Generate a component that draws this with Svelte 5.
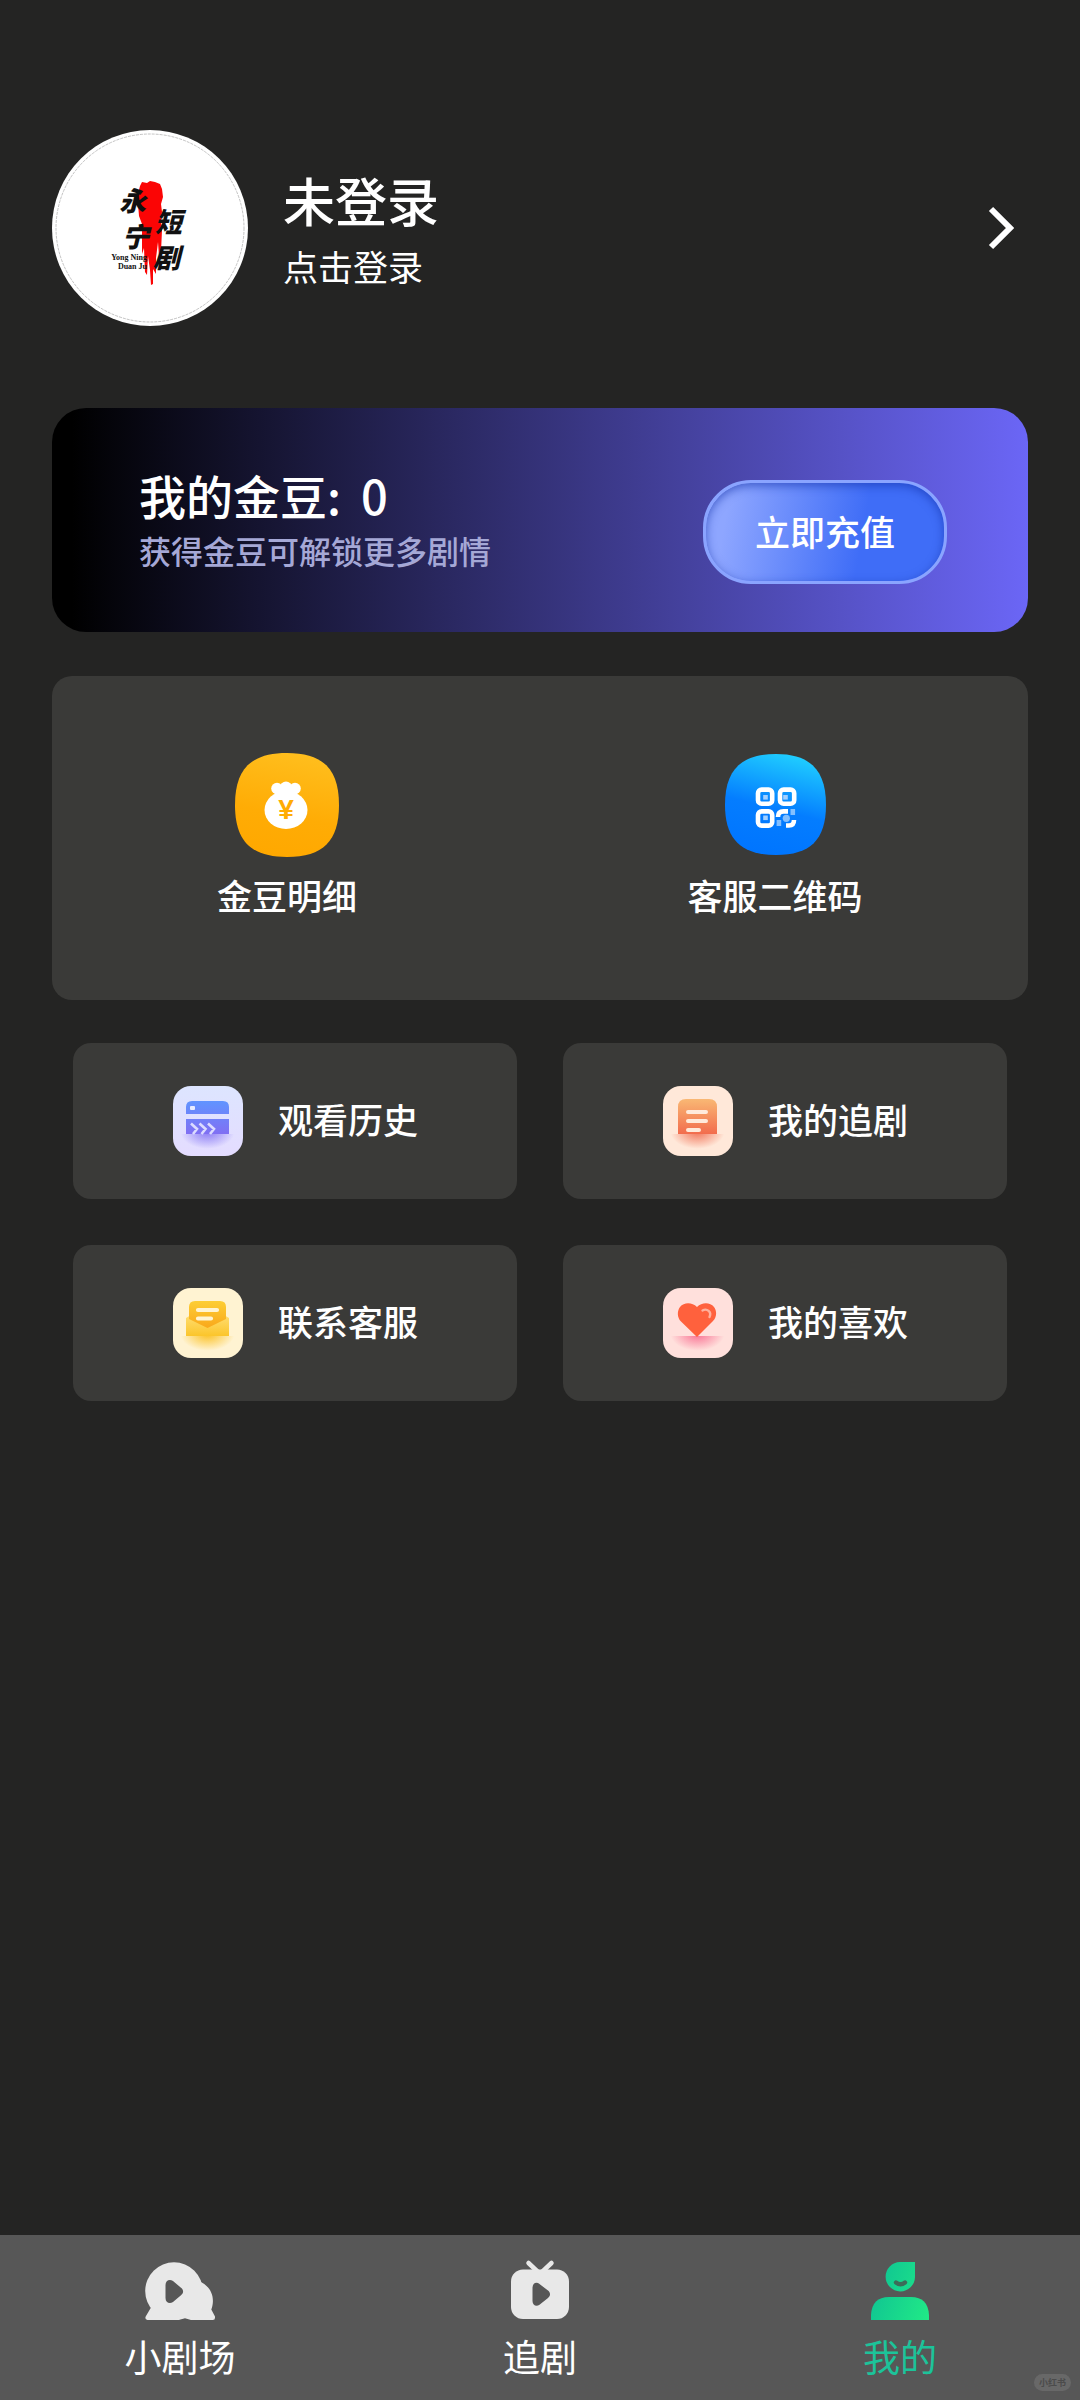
<script>
  let beans = 0;
  let activeTab = 'mine';

  const shortcuts = [
    { id: 'beans', label: '金豆明细' },
    { id: 'qrcode', label: '客服二维码' }
  ];

  const entries = [
    { id: 'history', label: '观看历史' },
    { id: 'follow', label: '我的追剧' },
    { id: 'service', label: '联系客服' },
    { id: 'like', label: '我的喜欢' }
  ];

  const tabs = [
    { id: 'theater', label: '小剧场' },
    { id: 'drama', label: '追剧' },
    { id: 'mine', label: '我的' }
  ];
</script>

<div class="page">
  <main>
    <a class="profile" href="#login">
      <svg class="avatar" viewBox="0 0 196 196" aria-hidden="true">
        <circle cx="98" cy="98" r="98" fill="#fff" />
        <circle cx="98" cy="98" r="94" fill="none" stroke="#9a9a9a" stroke-width="0.6" stroke-dasharray="3 1" />
        <!-- Brush stroke -->
        <path
          fill="#fb0505"
          d="M88 56 L90 52 L95 53 L98 51 L103 52 L108 54 L110 59 L111 67 L109 74 L110 82 L109 92 L110 100 L109 122 L107 126 L106 112 L104 128 L104 144 L101 139 L101 154 L99 155 L98 140 L96 126 L95 145 L93 142 L92 118 L90 124 L90 94 L87 86 L86 74 L86 64 Z"
        />
        <g class="brush" fill="#111">
          <text x="67" y="81">永</text>
          <text x="70" y="117">宁</text>
          <text x="103" y="102">短</text>
          <text x="101" y="138">剧</text>
        </g>
        <g class="pinyin" fill="#111">
          <text x="95" y="130">Yong Ning</text>
          <text x="95" y="139">Duan Ju</text>
        </g>
      </svg>
      <div class="who">
        <h1>未登录</h1>
        <p>点击登录</p>
      </div>
      <svg class="arrow" viewBox="0 0 26 44" aria-hidden="true">
        <path d="M3 3 L22 22 L3 41" fill="none" stroke="#fff" stroke-width="6" />
      </svg>
    </a>

    <section class="wallet">
      <div class="balance">
        <h2>我的金豆:<span class="count">{beans}</span></h2>
        <p>获得金豆可解锁更多剧情</p>
      </div>
      <button class="recharge" type="button">立即充值</button>
    </section>

    <section class="shortcuts">
      {#each shortcuts as item}
        <a class="shortcut" href="#{item.id}">
          <svg viewBox="0 0 104 104" aria-hidden="true">
            {#if item.id === 'beans'}
              <defs>
                <linearGradient id="gold" x1="0.6" y1="0" x2="0.4" y2="1">
                  <stop offset="0" stop-color="#ffbe1d" />
                  <stop offset="0.6" stop-color="#ffac05" />
                  <stop offset="1" stop-color="#ffa800" />
                </linearGradient>
              </defs>
              <path fill="url(#gold)" d="M52 0 C88 0 104 16 104 52 S88 104 52 104 0 88 0 52 16 0 52 0 Z" />
              <g fill="#fff">
                <ellipse cx="51" cy="57" rx="21.5" ry="19" />
                <circle cx="42" cy="35.5" r="5.8" />
                <circle cx="51" cy="34.5" r="6" />
                <circle cx="60" cy="35.5" r="5.8" />
                <path d="M38 37 H64 L60 45 H42 Z" />
              </g>
              <text class="yen" x="51" y="66" fill="#ffac05">¥</text>
            {:else}
              <defs>
                <linearGradient id="sky" x1="0.65" y1="0" x2="0.4" y2="1">
                  <stop offset="0" stop-color="#20ceff" />
                  <stop offset="0.55" stop-color="#047dff" />
                  <stop offset="1" stop-color="#0075ff" />
                </linearGradient>
              </defs>
              <path fill="url(#sky)" d="M53 1 C87 1 103 17 103 52 S87 102 53 102 2 87 2 52 18 1 53 1 Z" />
              <g fill="none" stroke="#fff" stroke-width="4.6">
                <rect x="35" y="36.6" width="14.2" height="14.2" rx="3.6" />
                <rect x="57" y="36.6" width="14.2" height="14.2" rx="3.6" />
                <rect x="35" y="58.4" width="14.2" height="14.2" rx="3.6" />
                <path d="M55 64 Q55 58.4 60.5 58.4 H65" />
                <path d="M63 72.5 H66 Q71 72.5 71 67" />
              </g>
              <g fill="#a3d0ff">
                <rect x="40.2" y="42" width="4.6" height="4.6" />
                <rect x="60.2" y="42" width="4.6" height="4.6" />
                <rect x="40.2" y="62.5" width="4.6" height="4.6" />
                <rect x="67.5" y="56" width="4.6" height="6" opacity="0.8" />
                <rect x="53.6" y="67" width="4.6" height="6" opacity="0.8" />
                <circle cx="63.3" cy="65.3" r="3.6" opacity="0.8" />
              </g>
            {/if}
          </svg>
          <span>{item.label}</span>
        </a>
      {/each}
    </section>

    <nav class="entries">
      {#each entries as item}
        <a class="entry" href="#{item.id}">
          <svg viewBox="0 0 70 70" aria-hidden="true">
            {#if item.id === 'history'}
              <defs>
                <linearGradient id="h-bg" x2="0" y2="1">
                  <stop offset="0" stop-color="#dde5ff" />
                  <stop offset="1" stop-color="#e4dcff" />
                </linearGradient>
                <linearGradient id="h-fg" x1="0" y1="15" x2="0" y2="48" gradientUnits="userSpaceOnUse">
                  <stop offset="0" stop-color="#6094ff" />
                  <stop offset="1" stop-color="#806ff3" />
                </linearGradient>
                <radialGradient id="h-sh" cx="34.5" cy="46" r="27" gradientUnits="userSpaceOnUse" gradientTransform="translate(0 17.5) scale(1 0.62)">
                  <stop offset="0" stop-color="#806ff3" stop-opacity="0.9" />
                  <stop offset="1" stop-color="#806ff3" stop-opacity="0" />
                </radialGradient>
              </defs>
              <rect width="70" height="70" rx="18" fill="url(#h-bg)" />
              <rect x="5" y="48" width="60" height="17" fill="url(#h-sh)" />
              <path fill="url(#h-fg)" d="M13 28 V21 Q13 15 19 15 H50 Q56 15 56 21 V28 Z M13 33 H56 V48 H13 Z" />
              <rect x="17" y="20" width="5" height="4" rx="1" fill="#e8edff" />
              <path fill="none" stroke="#dcdcff" stroke-width="2.6" d="M18 37.5 L24 43 L20 48 M26.5 37.5 L32.5 43 L28.5 48 M35 37.5 L41 43 L37 48" />
            {:else if item.id === 'follow'}
              <defs>
                <linearGradient id="f-fg" x2="0" y2="1">
                  <stop offset="0" stop-color="#f9b874" />
                  <stop offset="1" stop-color="#f26c4d" />
                </linearGradient>
                <radialGradient id="f-sh" cx="34.5" cy="46" r="27" gradientUnits="userSpaceOnUse" gradientTransform="translate(0 17.5) scale(1 0.62)">
                  <stop offset="0" stop-color="#f0694c" stop-opacity="0.9" />
                  <stop offset="1" stop-color="#f0694c" stop-opacity="0" />
                </radialGradient>
              </defs>
              <rect width="70" height="70" rx="18" fill="#ffe8d9" />
              <rect x="5" y="48" width="60" height="17" fill="url(#f-sh)" />
              <path fill="url(#f-fg)" d="M15 48 V21 Q15 13 23 13 H46 Q54 13 54 21 V48 Z" />
              <path fill="none" stroke="#ffeadb" stroke-width="4" stroke-linecap="round" d="M25 26 H43 M25 35 H43 M25 44 H36" />
            {:else if item.id === 'service'}
              <defs>
                <linearGradient id="s-paper" x2="0" y2="1">
                  <stop offset="0" stop-color="#fdce35" />
                  <stop offset="1" stop-color="#f9a81b" />
                </linearGradient>
                <linearGradient id="s-env" x2="0" y2="1">
                  <stop offset="0" stop-color="#ffdd70" />
                  <stop offset="1" stop-color="#fbc52b" />
                </linearGradient>
                <radialGradient id="s-sh" cx="34.5" cy="46" r="27" gradientUnits="userSpaceOnUse" gradientTransform="translate(0 17.5) scale(1 0.62)">
                  <stop offset="0" stop-color="#fbc020" />
                  <stop offset="1" stop-color="#fbc020" stop-opacity="0" />
                </radialGradient>
              </defs>
              <rect width="70" height="70" rx="18" fill="#fff3d2" />
              <rect x="5" y="48" width="60" height="17" fill="url(#s-sh)" />
              <path fill="url(#s-env)" d="M13 48 V30 L18 27 H51 L56 30 V48 Z" />
              <path fill="url(#s-paper)" d="M16 31 V19 Q16 13 22 13 H47 Q53 13 53 19 V31 L34.5 40 Z" />
              <path fill="none" stroke="#fff4d2" stroke-width="4.2" stroke-linecap="round" d="M25 22 H44 M25 30.5 H38" />
            {:else}
              <defs>
                <radialGradient id="l-sh" cx="34.5" cy="46" r="27" gradientUnits="userSpaceOnUse" gradientTransform="translate(0 17.5) scale(1 0.62)">
                  <stop offset="0" stop-color="#f8648a" stop-opacity="0.9" />
                  <stop offset="1" stop-color="#f8648a" stop-opacity="0" />
                </radialGradient>
              </defs>
              <rect width="70" height="70" rx="18" fill="#ffe0dc" />
              <rect x="5" y="48" width="60" height="17" fill="url(#l-sh)" />
              <path fill="#ff613d" d="M34 49 L18 33.5 C14 29.5 14 23 17 19 C21 14 29 14 34 19 C39 14 47 14 51 19 C54 23 54 29 50 33 Z" />
              <path fill="none" stroke="#ffb09c" stroke-width="2.4" stroke-linecap="round" d="M39.5 22.5 C44 20 49 24 46.5 29" />
            {/if}
          </svg>
          <span>{item.label}</span>
        </a>
      {/each}
    </nav>
  </main>

  <nav class="tabbar">
    {#each tabs as tab}
      <button type="button" class:active={activeTab === tab.id} on:click={() => (activeTab = tab.id)}>
        <svg viewBox="0 0 72 64" aria-hidden="true">
          {#if tab.id === 'theater'}
            <g fill="#e8e8e8">
              <circle cx="30" cy="33" r="28.8" />
              <path d="M55 23.5 C66 27 72 39 67.3 51.5 L71 58.5 Q71.5 62 68.7 62 H47 L41 60.3 L34.5 62 H3.5 Q0.5 61.5 1.7 58.5 L6.7 50 L20 40 Z" />
            </g>
            <path fill="#575757" d="M21.5 27 C21.5 22.5 25.5 20.5 29 23 L37 29.8 C39.8 32 39.8 35 37 37.2 L29 44 C25.5 46.5 21.5 44.5 21.5 40 Z" />
          {:else if tab.id === 'drama'}
            <path fill="none" stroke="#e8e8e8" stroke-width="4.5" stroke-linecap="round" d="M24.5 5 L34 14 M47.5 5 L38 14" />
            <rect x="7" y="11.5" width="58" height="49.5" rx="12" fill="#e8e8e8" />
            <path fill="#575757" d="M28.5 30 C28.5 25 32.5 23.5 35.5 26 L44 32.6 C46.7 34.8 46.7 37.8 44 40 L35.5 46.7 C32.5 49 28.5 47.5 28.5 43 Z" />
          {:else}
            <defs>
              <linearGradient id="me" x1="7" y1="30" x2="65" y2="50" gradientUnits="userSpaceOnUse">
                <stop offset="0" stop-color="#0fc493" />
                <stop offset="1" stop-color="#20e887" />
              </linearGradient>
            </defs>
            <path fill="url(#me)" d="M36 4 H51 V19 A14.7 14.7 0 1 1 36 4 Z" />
            <path fill="url(#me)" d="M7 62 V57 Q8 39 25 39 H47 Q64 39 65 57 V62 Z" />
            <path fill="none" stroke="#3d6b59" stroke-width="4.4" stroke-linecap="round" d="M32 24.5 Q36.5 28 41 24.5" />
          {/if}
        </svg>
        <span>{tab.label}</span>
      </button>
    {/each}
    <small class="mark">小红书</small>
  </nav>
</div>

<style>
  :global(body) {
    background: #242423;
  }

  .page {
    display: flex;
    flex-direction: column;
    min-height: 100vh;
    color: #fff;
    font-family: 'Noto Sans CJK SC', sans-serif;
    font-size: 35px;
    line-height: 48px;
  }

  main {
    flex: 1;
    padding: 130px 52px 44px;
  }

  h1,
  h2,
  p {
    margin: 0;
    font-weight: 400;
  }

  a {
    color: inherit;
    text-decoration: none;
  }

  svg {
    display: block;
    flex: none;
  }

  button {
    color: inherit;
    font: inherit;
    cursor: pointer;
  }

  .profile {
    display: flex;
    align-items: center;
    gap: 35px;
    padding-right: 14px;
  }

  .avatar {
    width: 196px;
    height: 196px;
  }

  .brush {
    font-size: 27px;
    font-style: italic;
    font-weight: 900;
  }

  .pinyin {
    font-family: 'Liberation Serif', serif;
    font-size: 8px;
    font-weight: 700;
    text-anchor: end;
  }

  .who {
    flex: 1;
    padding-bottom: 2px;
  }

  .who h1 {
    margin-bottom: 6px;
    font-size: 52px;
    font-weight: 500;
    line-height: 72px;
  }

  .arrow {
    width: 26px;
    height: 44px;
  }

  .wallet {
    display: flex;
    align-items: flex-end;
    justify-content: space-between;
    box-sizing: border-box;
    min-height: 224px;
    margin-top: 82px;
    padding: 48px 81px 48px 87px;
    border-radius: 34px;
    background: linear-gradient(90deg, #000 2%, #6b66f6);
  }

  .balance {
    padding-bottom: 12px;
  }

  .wallet h2 {
    font-size: 47px;
    font-weight: 500;
    line-height: 66px;
  }

  .count {
    margin-left: 20px;
  }

  .wallet p {
    color: #a5a8d6;
    font-size: 32px;
    font-weight: 500;
    line-height: 44px;
  }

  .recharge {
    padding: 24px 49px 26px;
    border: 3px solid #8aa4ff;
    border-radius: 48px;
    background: linear-gradient(100deg, #8ea6ff 10%, #3f6df7 65%);
    box-shadow: inset 0 3px 10px rgba(20, 50, 170, 0.6);
    font-weight: 500;
  }

  .shortcuts {
    display: grid;
    grid-template-columns: 1fr 1fr;
    margin-top: 44px;
    padding: 77px 0 81px;
    border-radius: 20px;
    background: #3a3a38;
  }

  .shortcut {
    display: flex;
    flex-direction: column;
    align-items: center;
    gap: 14px;
    padding-right: 18px;
    font-weight: 500;
  }

  .shortcut svg {
    width: 104px;
    height: 104px;
  }

  .yen {
    font-family: 'Liberation Sans', sans-serif;
    font-size: 28px;
    font-weight: 700;
    text-anchor: middle;
  }

  .entries {
    display: grid;
    grid-template-columns: 1fr 1fr;
    gap: 46px;
    margin: 43px 21px 0;
  }

  .entry {
    display: flex;
    align-items: center;
    gap: 35px;
    padding: 43px 20px 43px 100px;
    border-radius: 18px;
    background: #3a3a38;
    font-weight: 500;
  }

  .entry svg {
    width: 70px;
    height: 70px;
  }

  .entry span {
    padding-bottom: 4px;
  }

  .tabbar {
    position: relative;
    display: grid;
    grid-template-columns: repeat(3, 1fr);
    background: #575757;
  }

  .tabbar button {
    display: flex;
    flex-direction: column;
    align-items: center;
    gap: 10px;
    padding: 23px 0 20px;
    border: 0;
    background: none;
    font-size: 37px;
  }

  .tabbar svg {
    width: 72px;
    height: 64px;
  }

  .tabbar .active {
    color: #1cc39a;
  }

  .mark {
    position: absolute;
    right: 9px;
    bottom: 9px;
    padding: 0 5px;
    border-radius: 9px;
    background: #686868;
    color: #4b4b4b;
    font-size: 9px;
    font-weight: 700;
    line-height: 17px;
  }
</style>
